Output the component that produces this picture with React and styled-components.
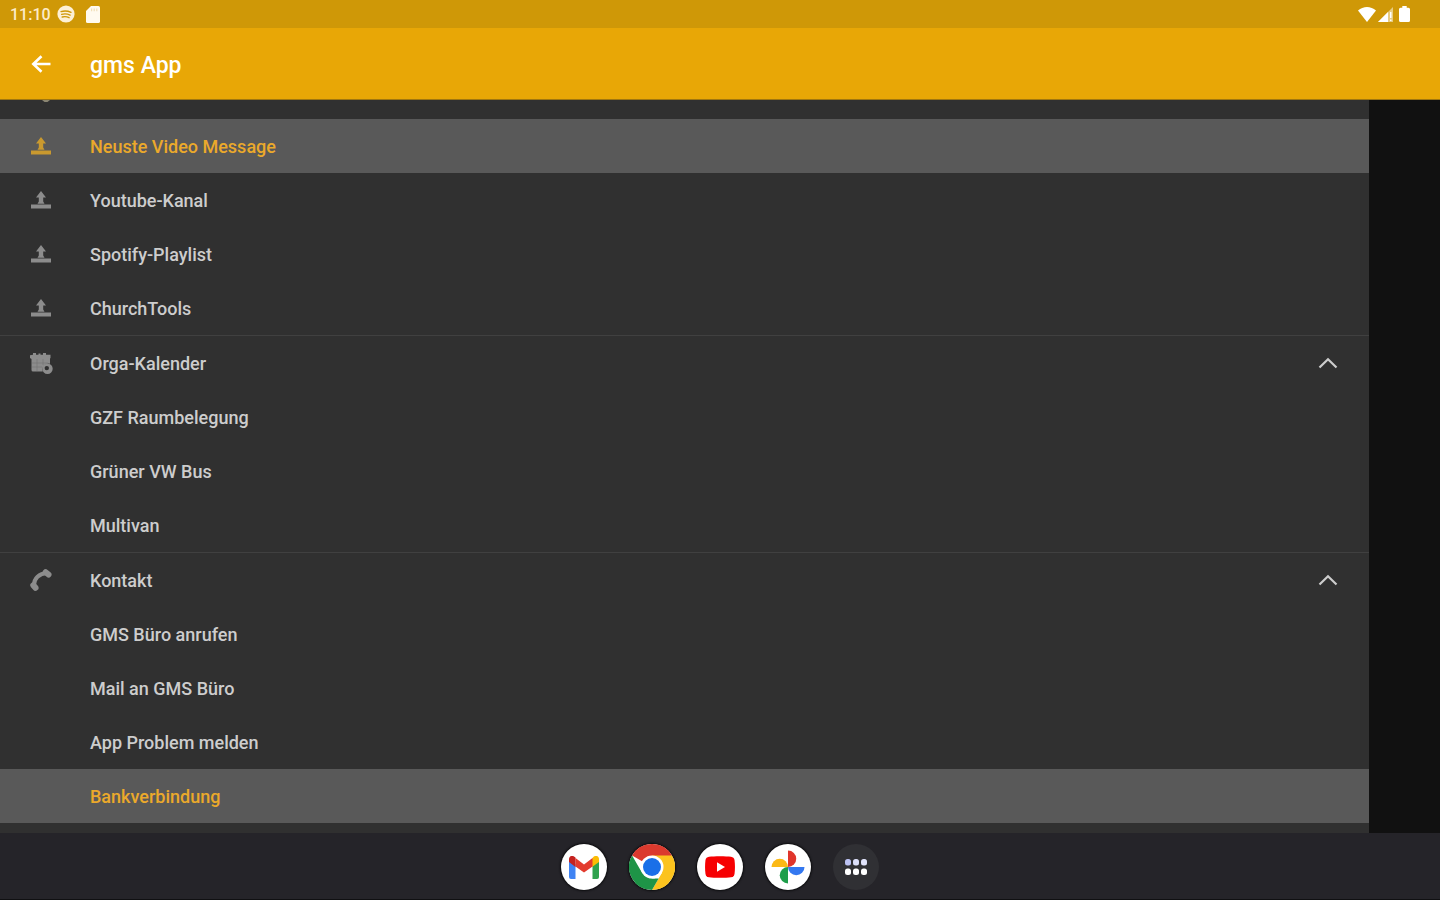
import React, { useState } from "react";
import styled, { createGlobalStyle } from "styled-components";

const SpotifyIcon = () => (
  <svg width="18" height="18" viewBox="0 0 18 18" fill="none">
    <circle cx="9" cy="9" r="8.6" fill="#fdf0d6" />
    <path
      d="M4 6.6c3.4-1 7-.7 10 .8M4.6 9.4c2.9-.8 6-.5 8.500.8M5.200 12c2.400-.6 4.800-.4 6.900.7"
      stroke="#cf9807"
      strokeWidth="1.300"
      strokeLinecap="round"
    />
  </svg>
);

const SdIcon = () => (
  <svg width="14" height="17" viewBox="0 0 14 17">
    <path
      d="M5 0h7.400A1.600 1.600 0 0 1 14 1.600v13.800a1.600 1.600 0 0 1-1.600 1.600H1.600A1.600 1.600 0 0 1 0 15.400V5z"
      fill="#fffaf0"
    />
    <path d="M5 2.500h1.200v2.800H5zM7.600 2.500h1.200v2.800H7.600zM10.200 2.500h1.200v2.800h-1.200z" fill="#f1dfb8" />
  </svg>
);

const WifiIcon = () => (
  <svg width="18" height="15" viewBox="0 0 18 15">
    <path d="M0 3.600C5.200-1.200 12.800-1.200 18 3.600L9 15z" fill="#fff" />
  </svg>
);

const SignalIcon = () => (
  <svg width="15" height="15" viewBox="0 0 15 15">
    <path d="M15 0v15H0z" fill="#fff" fillOpacity="0.5" />
    <path d="M10 5v10H0z" fill="#fff" />
    <path d="M12 5h1.500v6H12zM12 12.500h1.500V14H12z" fill="#fff" />
  </svg>
);

const BatteryIcon = () => (
  <svg width="11" height="16" viewBox="0 0 11 16">
    <path
      d="M3.300 0h4.400v1.800h1.800A1.500 1.500 0 0 1 11 3.300v11.200A1.500 1.500 0 0 1 9.500 16h-8A1.500 1.500 0 0 1 0 14.500V3.300a1.500 1.500 0 0 1 1.500-1.500h1.800z"
      fill="#fff"
    />
  </svg>
);

const BackIcon = () => (
  <svg width="20" height="18" viewBox="0 0 20 18" fill="none">
    <path d="M10.500 1.200 2.300 9l8.200 7.800M2 9h17.500" stroke="#fff" strokeWidth="2.600" />
  </svg>
);

const UploadIcon = () => (
  <svg width="20" height="18" viewBox="0 0 20 18" fill="currentColor">
    <path d="M10 0l5 6.500h-2.800v4l1.300 2.300h-7l1.300-2.300v-4H5z" />
    <path d="M0 13.500h20v4H0z" />
  </svg>
);

const CalendarIcon = () => (
  <svg width="24" height="22" viewBox="0 0 24 22" fill="currentColor">
    <path d="M1 3.200l3-.4V1h3v1.800h2.500V1.500h2v1.300H14V1h3v1.800h4.500V6l-.5.500v5.300a6 6 0 0 0-7.200 7.700H4A1.500 1.500 0 0 1 2.500 18V7L1 6z" />
    <path d="M8 7v12M14 7v6M3 11h16M3 15h10" stroke="#6f6f6f" strokeWidth="0.500" />
    <path
      fillRule="evenodd"
      d="M18.500 11.500a5.200 5.200 0 1 1 0 10.400 5.200 5.200 0 0 1 0-10.400zm-.7 2.400a2.200 2.200 0 1 0 0 4.400 2.200 2.200 0 0 0 0-4.400z"
    />
  </svg>
);

const PhoneIcon = () => (
  <svg width="22" height="22" viewBox="0 0 22 22" fill="none" stroke="currentColor">
    <path d="M4 16C4 9.500 9 4.500 17 4" strokeWidth="4" />
    <path d="M15.700 3.200l2.800 2.300M3.300 16.200l2.200 2.600" strokeWidth="6" strokeLinecap="round" />
  </svg>
);

const ChevronIcon = () => (
  <svg width="20" height="12" viewBox="0 0 20 12" fill="none">
    <path d="M1.500 10.500 10 2.200l8.500 8.300" stroke="currentColor" strokeWidth="2.200" />
  </svg>
);

const GmailIcon = () => (
  <svg width="30" height="23" viewBox="0 0 30 23">
    <path d="M0 4v17a2 2 0 0 0 2 2h4.500V8z" fill="#3f83f3" />
    <path d="M30 4v17a2 2 0 0 1-2 2h-4.500V8z" fill="#2fa24e" />
    <path d="M23 2.500V11l7-5V3c0-2.800-3.200-4-5.400-2.300z" fill="#fbbc04" />
    <path d="M6.500 10.500V2L15 8.500 23.500 2v8.500L15 16.500z" fill="#e33b2e" />
    <path d="M0 3v3l6.500 5V1.500L5.400.7C3.200-1 0 .2 0 3z" fill="#c5221f" />
  </svg>
);

const ChromeIcon = () => (
  <svg width="46" height="46" viewBox="0 0 46 46">
    <path d="M23 23 3.080 11.500A23 23 0 0 1 42.920 11.500z" fill="#db3a2e" />
    <path d="M23 11.500h19.920A23 23 0 0 1 23 46l9.960-17.250z" fill="#fcc31e" />
    <path d="M3.080 11.500 13.040 28.750 23 34.500h6.640L23 46A23 23 0 0 1 3.080 11.500z" fill="#1e9447" />
    <circle cx="23" cy="23" r="11.500" fill="#fff" />
    <circle cx="23" cy="23" r="9" fill="#1a6fe8" />
  </svg>
);

const YoutubeIcon = () => (
  <svg width="30" height="22" viewBox="0 0 30 22">
    <path
      d="M4 .7C9 0 21 0 26 .7c2 .3 3.200 1.500 3.500 3.300.6 4 .6 10 0 14-.3 1.800-1.500 3-3.500 3.300-5 .7-17 .7-22 0-2-.3-3.200-1.500-3.500-3.300-.6-4-.6-10 0-14C.8 2.200 2 1 4 .7z"
      fill="#f60002"
    />
    <path d="M12 6.200v9.600l8-4.800z" fill="#fff" />
  </svg>
);

const PhotosIcon = () => (
  <svg width="34" height="34" viewBox="0 0 34 34">
    <path d="M17 17V.5a8.250 8.250 0 0 1 0 16.500z" fill="#e0352b" />
    <path d="M17 17h16.500a8.250 8.250 0 0 1-16.500 0z" fill="#3478f0" />
    <path d="M17 17v16.500A8.250 8.250 0 0 1 17 17z" fill="#1e9e4a" />
    <path d="M17 17H.5a8.250 8.250 0 0 1 16.500 0z" fill="#fbb917" />
  </svg>
);

const AppsIcon = () => (
  <svg width="24" height="18" viewBox="0 0 24 18" fill="#fff">
    <rect x="1" y="1" width="6" height="6.500" rx="2.500" fill="#bcc2f3" />
    <rect x="9" y="1" width="6" height="6.500" rx="2.500" fill="#dcdff9" />
    <rect x="17" y="1" width="6" height="6.500" rx="2.500" fill="#e0e3fa" />
    <rect x="1" y="10.500" width="6" height="6.500" rx="2.500" />
    <rect x="9" y="10.500" width="6" height="6.500" rx="2.500" />
    <rect x="17" y="10.500" width="6" height="6.500" rx="2.500" />
  </svg>
);

const links = ["Neuste Video Message", "Youtube-Kanal", "Spotify-Playlist", "ChurchTools"];

const groups = [
  {
    title: "Orga-Kalender",
    icon: <CalendarIcon />,
    items: ["GZF Raumbelegung", "Grüner VW Bus", "Multivan"],
  },
  {
    title: "Kontakt",
    icon: <PhoneIcon />,
    items: ["GMS Büro anrufen", "Mail an GMS Büro", "App Problem melden", "Bankverbindung"],
  },
];

const dock = [
  { name: "Gmail", icon: <GmailIcon /> },
  { name: "Chrome", icon: <ChromeIcon /> },
  { name: "YouTube", icon: <YoutubeIcon /> },
  { name: "Fotos", icon: <PhotosIcon /> },
];

const Group = ({ title, icon, items, active }) => {
  const [open, setopen] = useState(true);

  return (
    <Section>
      <GroupRow aria-expanded={open} onClick={() => setopen(!open)}>
        <IconSlot>{icon}</IconSlot>
        <Label>{title}</Label>
        <Chevron $open={open}>
          <ChevronIcon />
        </Chevron>
      </GroupRow>
      {open &&
        items.map((item) => (
          <LinkRow href="#" key={item} $active={active.includes(item)}>
            <IconSlot />
            <Label>{item}</Label>
          </LinkRow>
        ))}
    </Section>
  );
};

const App = () => {
  const active = ["Neuste Video Message", "Bankverbindung"];

  return (
    <>
      <GlobalStyle />
      <Screen>
        <StatusBar>
          <StatusLeft>
            <span>11:10</span>
            <SpotifyIcon />
            <SdIcon />
          </StatusLeft>
          <StatusRight>
            <WifiIcon />
            <SignalIcon />
            <BatteryIcon />
          </StatusRight>
        </StatusBar>

        <AppBar>
          <BackButton aria-label="Zurück">
            <BackIcon />
          </BackButton>
          <h1>gms App</h1>
        </AppBar>

        <Content>
          <Drawer>
            <ScrolledRow>
              <svg width="8" height="2" viewBox="0 0 8 2">
                <path d="M0 0h8L5.500 2h-3z" fill="#8b8672" />
              </svg>
            </ScrolledRow>
            {links.map((link) => (
              <LinkRow href="#" key={link} $active={active.includes(link)}>
                <IconSlot>
                  <UploadIcon />
                </IconSlot>
                <Label>{link}</Label>
              </LinkRow>
            ))}
            {groups.map((group) => (
              <Group key={group.title} {...group} active={active} />
            ))}
          </Drawer>
        </Content>

        <Dock>
          {dock.map(({ name, icon }) => (
            <DockButton key={name} aria-label={name}>
              {icon}
            </DockButton>
          ))}
          <DockButton $dark aria-label="Alle Apps">
            <AppsIcon />
          </DockButton>
        </Dock>
      </Screen>
    </>
  );
};

export default App;

const GlobalStyle = createGlobalStyle`
  * {
    box-sizing: border-box;
  }

  body {
    margin: 0;
    background: #111;
    font-family: Roboto, "Liberation Sans", sans-serif;
  }

  button {
    border: 0;
    padding: 0;
    background: none;
    font: inherit;
    color: inherit;
    cursor: pointer;
  }

  svg {
    display: block;
    flex-shrink: 0;
  }
`;

const Screen = styled.div`
  display: flex;
  flex-direction: column;
  height: 100vh;
`;

const StatusBar = styled.div`
  display: flex;
  align-items: center;
  justify-content: space-between;
  flex-shrink: 0;
  height: 28px;
  padding: 0 30px 0 10px;
  background: #cf9807;
`;

const StatusLeft = styled.div`
  display: flex;
  align-items: center;
  gap: 11px;
  font-size: 16px;
  font-weight: 500;
  color: #fdebc8;

  span {
    margin-right: -5px;
  }
`;

const StatusRight = styled.div`
  display: flex;
  align-items: center;
  gap: 2px;

  svg:last-child {
    margin-left: 4px;
  }
`;

const AppBar = styled.header`
  display: flex;
  align-items: center;
  flex-shrink: 0;
  height: 72px;
  background: #e8a706;
  border-bottom: 1px solid #a0770f;
  color: #fff;

  h1 {
    margin: 0;
    padding-top: 4px;
    font-size: 23px;
    font-weight: 500;
  }
`;

const BackButton = styled.button`
  display: flex;
  width: 90px;
  padding-left: 31px;
`;

const Content = styled.main`
  flex: 1;
  min-height: 0;
  overflow: hidden;
  background: #111;
`;

const Drawer = styled.nav`
  height: 100%;
  margin-right: 71px;
  overflow: hidden;
  background: #303030;
`;

const ScrolledRow = styled.div`
  height: 19px;
  padding-left: 42px;
`;

const LinkRow = styled.a`
  display: flex;
  align-items: center;
  width: 100%;
  height: 54px;
  text-decoration: none;
  background: ${(props) => (props.$active ? "#595959" : "transparent")};
  color: ${(props) => (props.$active ? "#eba92b" : "#cdcdcd")};

  svg {
    color: ${(props) => (props.$active ? "#c9992f" : "#8c8c8c")};
  }
`;

const GroupRow = styled.button`
  display: flex;
  align-items: center;
  width: 100%;
  height: 54px;

  && {
    color: #cdcdcd;
  }
`;

const Section = styled.section`
  border-top: 1px solid #404040;
`;

const IconSlot = styled.span`
  display: flex;
  justify-content: center;
  width: 82px;
  margin-right: 8px;
  color: #8c8c8c;
`;

const Label = styled.span`
  padding-top: 2px;
  font-size: 18px;
  font-weight: 500;
  line-height: 24px;
`;

const Chevron = styled.span`
  margin-left: auto;
  margin-right: 31px;
  transform: ${(props) => (props.$open ? "none" : "rotate(180deg)")};
`;

const Dock = styled.footer`
  display: flex;
  align-items: center;
  justify-content: center;
  gap: 22px;
  flex-shrink: 0;
  height: 67px;
  padding-top: 2px;
  background: #252429;
  border-bottom: 1px solid #101012;
`;

const DockButton = styled.button`
  display: flex;
  align-items: center;
  justify-content: center;
  width: 46px;
  height: 46px;
  border-radius: 50%;

  && {
    background: ${(props) => (props.$dark ? "#303034" : "#fff")};
    box-shadow: ${(props) => (props.$dark ? "none" : "0 0 2px 1px #0c0c0e")};
  }
`;
